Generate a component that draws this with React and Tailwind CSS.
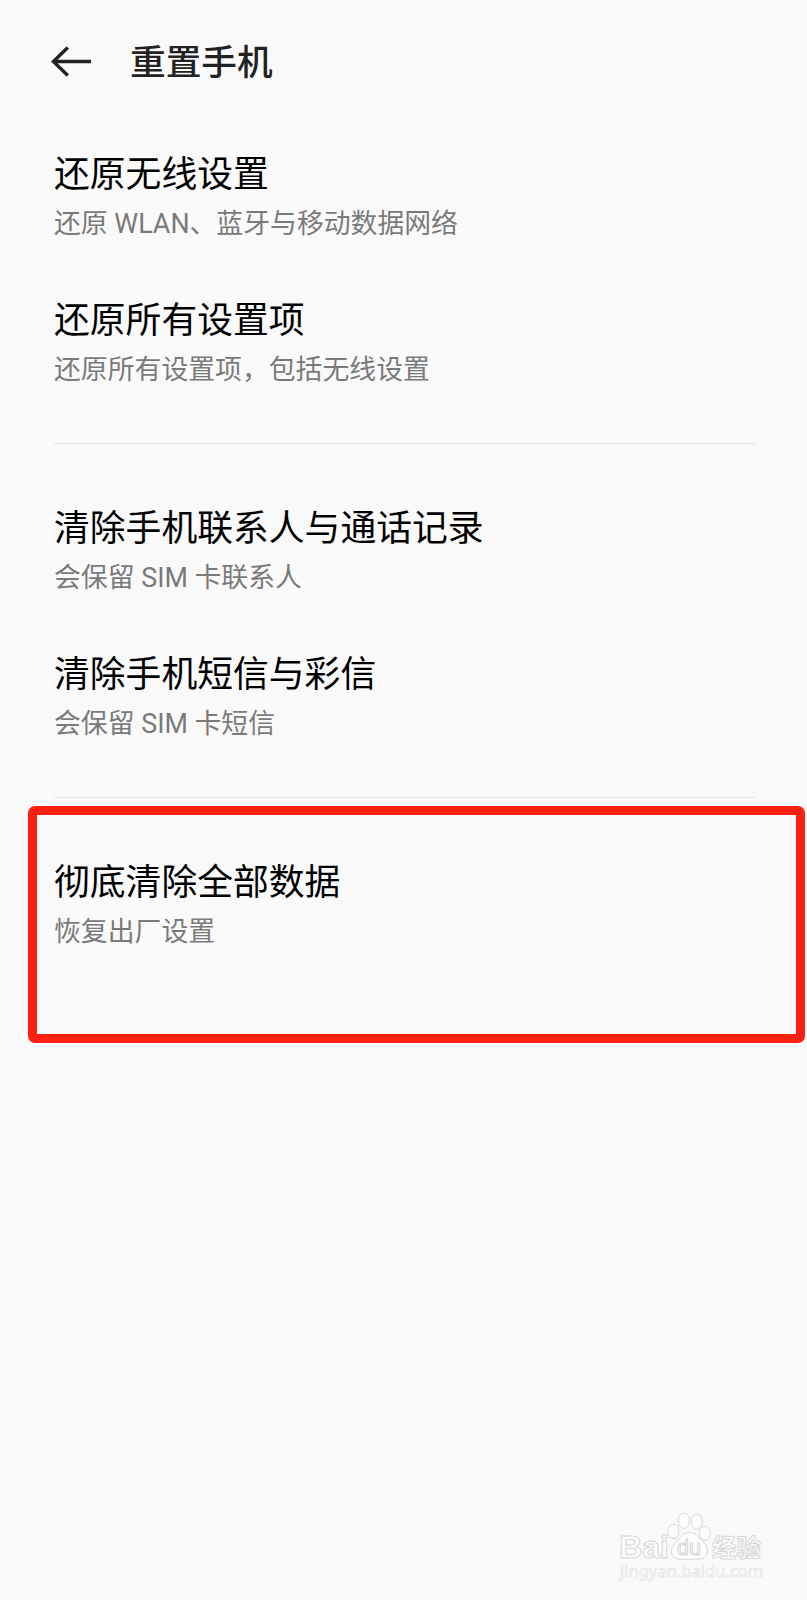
import React from 'react';

const groups = [
  [
    { title: '还原无线设置', desc: '还原 WLAN、蓝牙与移动数据网络' },
    { title: '还原所有设置项', desc: '还原所有设置项，包括无线设置' }
  ],
  [
    { title: '清除手机联系人与通话记录', desc: '会保留 SIM 卡联系人' },
    { title: '清除手机短信与彩信', desc: '会保留 SIM 卡短信' }
  ],
  [{ title: '彻底清除全部数据', desc: '恢复出厂设置' }]
];

function BackArrow() {
  return (
    <svg className="w-10 h-8" viewBox="0 0 40 32" fill="none" stroke="#222222" strokeWidth="3.4">
      <path d="M40 15.5H2.5" />
      <path d="M16.8 1.5L2.4 15.5L16.8 29.5" />
    </svg>
  );
}

function SettingItem({ title, desc }) {
  return (
    <div>
      <h2 className="h-[50px] leading-[50px] text-[35.8px] text-black">{title}</h2>
      <p className="h-[49px] leading-[48px] text-[26.85px] text-[#7a7a7a]">{desc}</p>
    </div>
  );
}

function Watermark() {
  return (
    <svg className="w-[156px] h-[80px] overflow-visible" viewBox="0 0 156 80" fill="#fdfdfd" stroke="#d6d6d6" strokeWidth="1">
      <ellipse cx="53.5" cy="31.5" rx="5.5" ry="7.3" />
      <ellipse cx="63.8" cy="20.7" rx="5.6" ry="7.6" />
      <ellipse cx="76.7" cy="21.7" rx="5.6" ry="7.6" />
      <ellipse cx="84.8" cy="33.3" rx="5.6" ry="7" />
      <path d="M69.5 32.5C75 32.5 78 36 81 39.5C85 43.5 88 47 87.5 52C87 57 83 59.2 77 59.2H61C55 59.2 51.5 56.5 51.5 51.5C51.5 46.5 55 43 59 39C62 35.5 64.5 32.5 69.5 32.5Z" />
      <text x="-1" y="57.5" textLength="50" lengthAdjust="spacingAndGlyphs" fontSize="31" fontWeight="700" fontFamily="Liberation Sans, sans-serif">Bai</text>
      <text x="57" y="55" textLength="24" lengthAdjust="spacingAndGlyphs" fontSize="22" fontFamily="Liberation Sans, sans-serif">du</text>
      <text x="92" y="56.5" textLength="49" lengthAdjust="spacingAndGlyphs" fontSize="25" fontWeight="700" fontFamily="Noto Sans CJK SC, sans-serif">经验</text>
      <text x="0" y="77" textLength="143" lengthAdjust="spacingAndGlyphs" fontSize="17" strokeWidth="0.6" stroke="#e0e0e0" fontFamily="Noto Sans, sans-serif">jingyan.baidu.com</text>
    </svg>
  );
}

export default function App() {
  return (
    <div className="relative flex flex-col w-full h-[1600px] overflow-hidden bg-[#fafafa] font-['Roboto','Noto_Sans_CJK_SC',sans-serif]">
      <header className="flex items-center h-[124px] pl-[51px] gap-[39px]">
        <BackArrow />
        <h1 className="pt-px text-[35.7px] leading-[50px] font-medium text-[#222222]">重置手机</h1>
      </header>

      <main className="flex flex-col pt-[26px] pl-[54px] pr-[52px]">
        {groups.map((items, index) => (
          <section
            key={index}
            className={index > 0 ? 'mt-[47.5px] pt-[60.5px] border-t border-[#e4e4e4]' : ''}
          >
            <div className="flex flex-col gap-[47px]">
              {items.map((item) => (
                <SettingItem key={item.title} {...item} />
              ))}
            </div>
          </section>
        ))}
      </main>

      {/* Highlight around the factory reset entry */}
      <div className="absolute left-[28px] top-[806px] w-[777px] h-[237px] border-[9px] border-[#fb2012] rounded-[7px]" />

      <footer className="mt-auto flex justify-end pr-[31px] pb-5">
        <Watermark />
      </footer>
    </div>
  );
}
